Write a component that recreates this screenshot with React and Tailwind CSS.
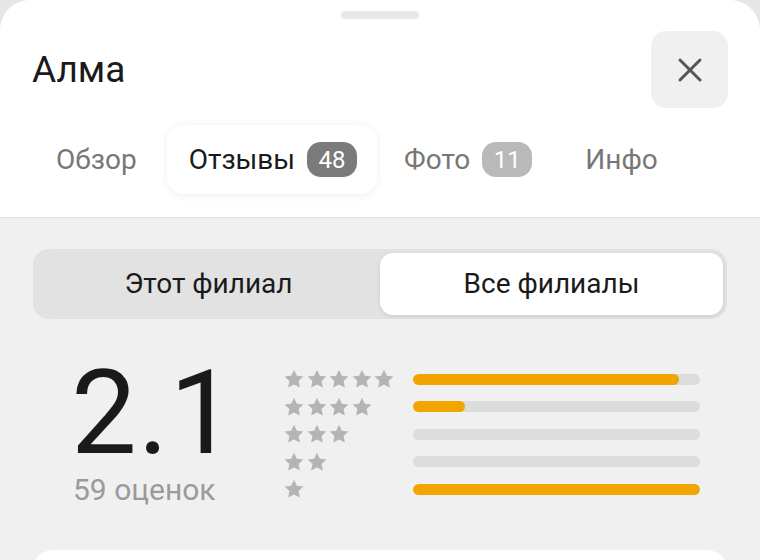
import React from 'react';

const Star = ({ size = 22 }) => (
  <svg width={size} height={size} viewBox="0 0 24 24" className="fill-[#b4b4b4]">
    <path d="M12 1.8l3.1 6.6 7.2.9-5.3 5 1.4 7.1L12 17.9l-6.4 3.5L7 14.3l-5.3-5 7.2-.9z" />
  </svg>
);

const rows = [
  { stars: 5, pct: 92.7 },
  { stars: 4, pct: 18 },
  { stars: 3, pct: 0 },
  { stars: 2, pct: 0 },
  { stars: 1, pct: 100 },
];

const Badge = ({ children, dark }) => (
  <span
    className={`ml-[12px] inline-flex h-[35px] w-[50px] items-center justify-center rounded-[14px] text-[24px] text-white ${
      dark ? 'bg-[#7b7b7b]' : 'bg-[#b9b9b9]'
    }`}
  >
    {children}
  </span>
);

export default function App() {
  return (
    <div className="h-[560px] w-[760px] overflow-hidden bg-[#e6e6e4] font-['Roboto',sans-serif]">
      <div className="h-full overflow-hidden rounded-t-[30px] bg-white">
        <div className="flex justify-center pt-[11px]">
          <div className="h-[8px] w-[78px] rounded-full bg-[#e8e8e8]" />
        </div>

        <div className="flex items-center justify-between pl-[32px] pr-[32px] pt-[12px]">
          <h1 className="text-[37px] font-normal leading-none text-[#1a1a1a]">Алма</h1>
          <button className="flex h-[77px] w-[77px] items-center justify-center rounded-[15px] bg-[#f0f0f0]">
            <svg width="30" height="30" viewBox="0 0 24 24" fill="none" stroke="#555" strokeWidth="2.4" strokeLinecap="round">
              <path d="M4 4l16 16M20 4L4 20" />
            </svg>
          </button>
        </div>

        <div className="flex items-center pl-[56px] pt-[17px] text-[28px] text-[#777]">
          <div className="mr-[30px]">Обзор</div>
          <div className="flex h-[69px] items-center rounded-[16px] bg-white pl-[22px] pr-[20px] text-[#1a1a1a] shadow-[0_1px_8px_rgba(0,0,0,0.08)]">
            Отзывы<Badge dark>48</Badge>
          </div>
          <div className="ml-[27px] flex items-center">
            Фото<Badge>11</Badge>
          </div>
          <div className="ml-[53px]">Инфо</div>
        </div>

        <div className="mt-[23px] h-[345px] border-t border-[#e2e2e2] bg-[#f0f0f0] px-[33px] pt-[31px]">
          <div className="flex h-[70px] rounded-[16px] bg-[#e2e2e2] p-[4px] text-[28px] text-[#1a1a1a]">
            <div className="flex flex-1 items-center justify-center">Этот филиал</div>
            <div className="flex flex-1 items-center justify-center rounded-[13px] bg-white shadow-[0_1px_4px_rgba(0,0,0,0.1)]">
              Все филиалы
            </div>
          </div>

          <div className="flex pt-[44px]">
            <div className="w-[250px] pl-[38px] pt-[8px]">
              <div className="text-[117px] font-normal leading-[84px] tracking-[1px] text-[#1a1a1a]">2.1</div>
              <div className="mt-[17px] pl-[2px] text-[30px] leading-[36px] text-[#9a9a9a]">59 оценок</div>
            </div>
            <div className="flex flex-col gap-[5.5px] pt-[5px]">
              {rows.map((r) => (
                <div key={r.stars} className="flex h-[22px] items-center">
                  <div className="flex w-[130px]">
                    {Array.from({ length: r.stars }).map((_, i) => (
                      <span key={i} className="mr-[0.5px]">
                        <Star />
                      </span>
                    ))}
                  </div>
                  <div className="h-[11px] w-[287px] overflow-hidden rounded-full bg-[#dcdcdc]">
                    <div className="h-full rounded-full bg-[#f0a500]" style={{ width: `${r.pct}%` }} />
                  </div>
                </div>
              ))}
            </div>
          </div>
        </div>

        <div className="mx-[33px] -mt-[12px] h-[40px] rounded-t-[20px] bg-white" />
      </div>
    </div>
  );
}
